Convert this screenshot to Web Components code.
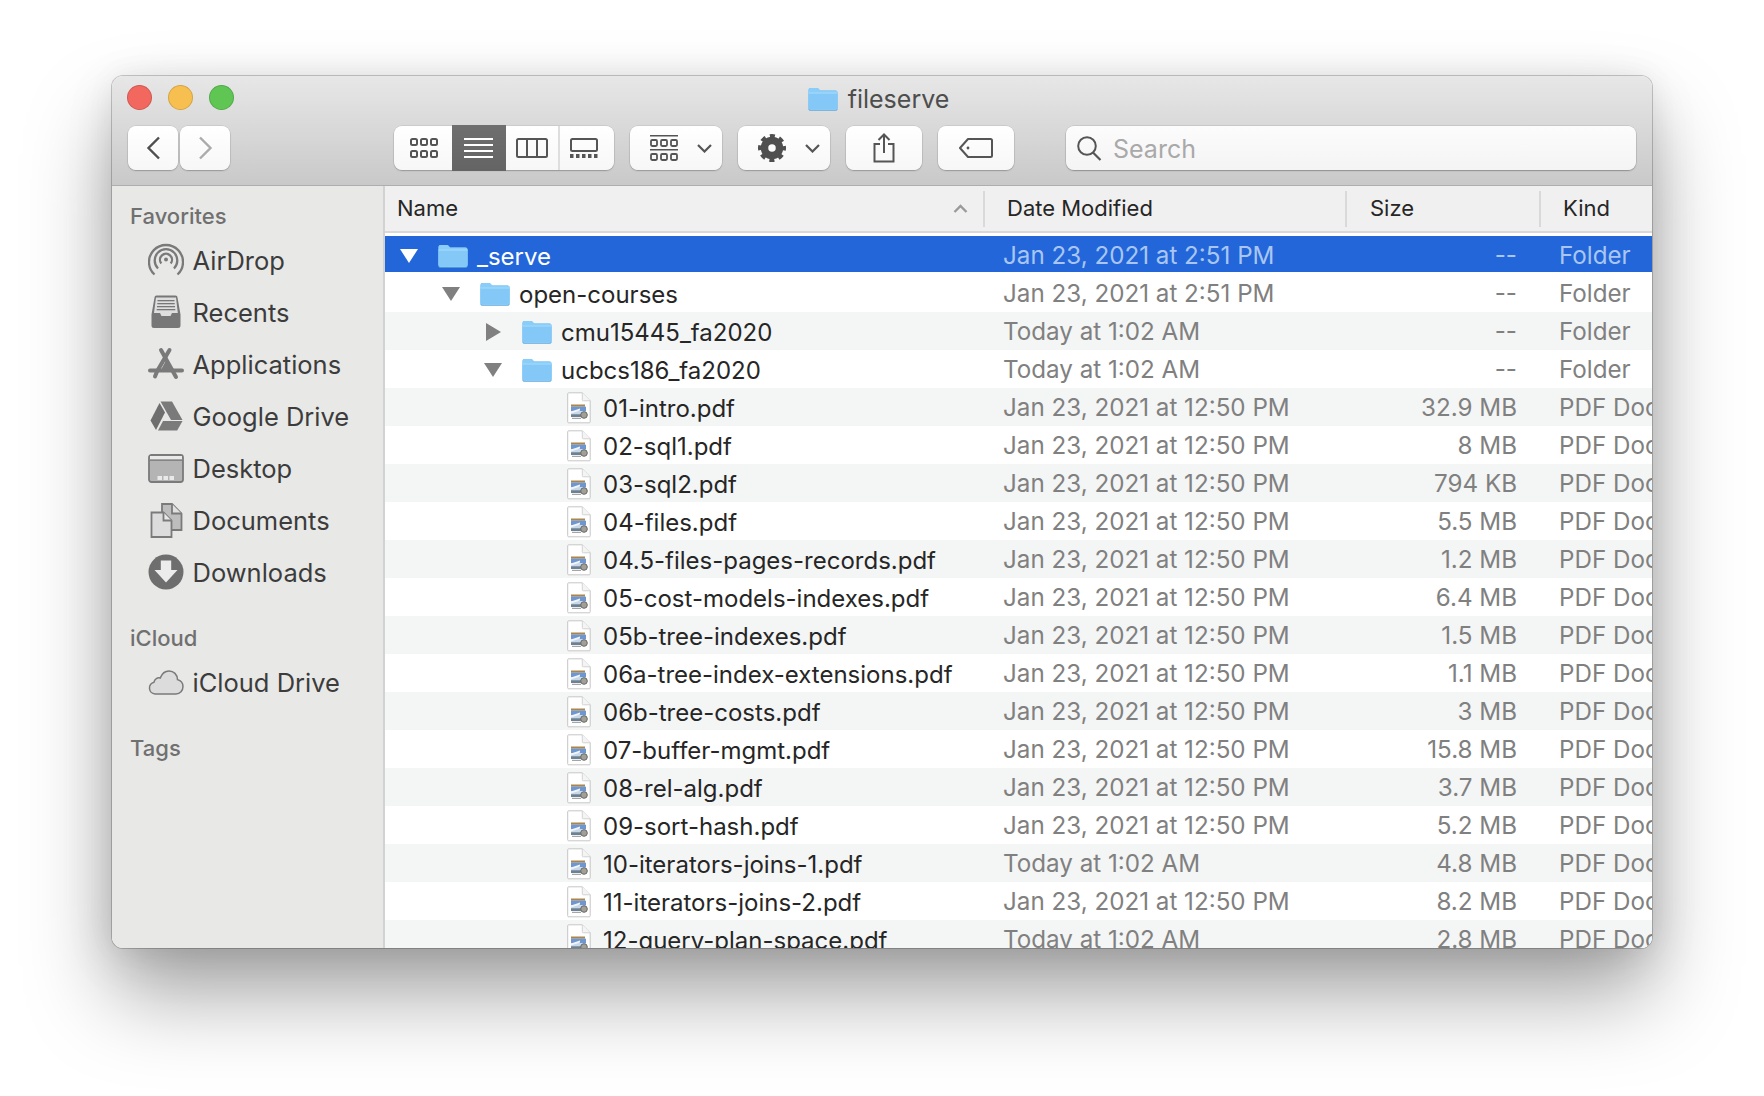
<!DOCTYPE html>
<html>
<head>
<meta charset="utf-8">
<title>fileserve</title>
<style>
html, body { margin:0; padding:0; background:#fff; }
body { width:1764px; height:1096px; overflow:hidden; font-family:Inter,"Liberation Sans",sans-serif; }
</style>
</head>
<body>
<finder-window>
  <window-toolbar slot="toolbar"></window-toolbar>
  <finder-sidebar slot="sidebar"></finder-sidebar>
  <file-list slot="list"></file-list>
</finder-window>

<script>
const FONT = 'Inter,"Liberation Sans",sans-serif';

// all the drawn icons, sized in real pixels
const folderSvg = (w, h) => `<svg width="${w}" height="${h}" viewBox="0 0 30 24">
  <path d="M0.5 3a2 2 0 0 1 2-2h6.5a2 2 0 0 1 1.5.7l1.6 1.8h15.4a2 2 0 0 1 2 2v16a2 2 0 0 1-2 2h-25a2 2 0 0 1-2-2z" fill="#6db5ea"/>
  <path d="M0.5 3a2 2 0 0 1 2-2h6.5a2 2 0 0 1 1.5.7l1.6 1.8h15.4a2 2 0 0 1 2 2v15.6a2 2 0 0 1-2 2h-25a2 2 0 0 1-2-2z" fill="#8acdf9"/>
  <path d="M0.5 6.2h29v14.4a1.6 1.6 0 0 1-1.6 1.6h-25.8a1.6 1.6 0 0 1-1.6-1.6z" fill="#84c8f7"/>
  <path d="M0.5 5.5h29v1h-29z" fill="#a5dafc"/>
  <path d="M0.5 21.4a2 2 0 0 0 2 1.6h25a2 2 0 0 0 2-1.6v1a2 2 0 0 1-2 1.2h-25a2 2 0 0 1-2-1.2z" fill="#5b9fd4"/>
</svg>`;

const ICONS = {
  folder: folderSvg(30, 24),
  pdf: `<svg width="24" height="32" viewBox="0 0 24 32">
    <path d="M0.7 1.8a1 1 0 0 1 1-1h13.6l7.9 8v21a1 1 0 0 1-1 1h-20.500a1 1 0 0 1-1-1z" fill="#fff" stroke="#c6c6c6" stroke-width="1"/>
    <path d="M15.300 .8v7a1 1 0 0 0 1 1h6.900" fill="#f4f4f4" stroke="#d2d2d2" stroke-width="1"/>
    <rect x="4" y="12.500" width="14" height="2.200" fill="#a98650"/>
    <rect x="4" y="14.700" width="15" height="4.500" fill="#6c97d4"/>
    <rect x="4" y="19.200" width="15" height="3" fill="#c6d8ea"/>
    <path d="M4 19.500l9-3v2l-9 3z" fill="#f4f4f4"/>
    <rect x="4" y="22.200" width="11" height="2.800" fill="#6d8194"/>
    <circle cx="17" cy="23" r="3.300" fill="#a09f98" stroke="#6a6a64" stroke-width="1"/>
    <rect x="5" y="25.800" width="9" height="1.200" fill="#a5a5a5"/>
  </svg>`,
  back: `<svg width="15" height="24" viewBox="0 0 15 24"><path d="M13 1.500 2.500 12 13 22.500" fill="none" stroke="#4f4f4f" stroke-width="2.400"/></svg>`,
  forward: `<svg width="15" height="24" viewBox="0 0 15 24"><path d="M2 1.500 12.500 12 2 22.500" fill="none" stroke="#ababab" stroke-width="2.400"/></svg>`,
  icons: `<svg width="28" height="20" viewBox="0 0 28 20" fill="none" stroke="#555" stroke-width="2">
    <rect x="1" y="1" width="6" height="6" rx="1.500"/><rect x="11" y="1" width="6" height="6" rx="1.500"/><rect x="21" y="1" width="6" height="6" rx="1.500"/>
    <rect x="1" y="13" width="6" height="6" rx="1.500"/><rect x="11" y="13" width="6" height="6" rx="1.500"/><rect x="21" y="13" width="6" height="6" rx="1.500"/></svg>`,
  list: `<svg width="29" height="20" viewBox="0 0 29 20" fill="#fff"><rect y="0" width="29" height="2"/><rect y="6" width="29" height="2"/><rect y="12" width="29" height="2"/><rect y="18" width="29" height="2"/></svg>`,
  columns: `<svg width="32" height="20" viewBox="0 0 32 20" fill="none" stroke="#555" stroke-width="2"><rect x="1" y="1" width="30" height="18" rx="1.500"/><path d="M11 1v18M21 1v18"/></svg>`,
  gallery: `<svg width="28" height="20" viewBox="0 0 28 20"><rect x="1" y="1" width="26" height="12" rx="1.500" fill="none" stroke="#555" stroke-width="2"/><g fill="#555"><rect y="16" width="3.500" height="4"/><rect x="6" y="16" width="3.500" height="4"/><rect x="12" y="16" width="3.500" height="4"/><rect x="18" y="16" width="3.500" height="4"/><rect x="24" y="16" width="3.500" height="4"/></g></svg>`,
  group: `<svg width="28" height="26" viewBox="0 0 28 26"><g fill="#555"><rect width="28" height="1.500"/><rect y="14" width="28" height="1.500"/></g><g fill="none" stroke="#555" stroke-width="1.800">
    <rect x="1" y="5" width="6" height="6" rx="1.200"/><rect x="11" y="5" width="6" height="6" rx="1.200"/><rect x="21" y="5" width="6" height="6" rx="1.200"/>
    <rect x="1" y="19" width="6" height="6" rx="1.200"/><rect x="11" y="19" width="6" height="6" rx="1.200"/><rect x="21" y="19" width="6" height="6" rx="1.200"/></g></svg>`,
  chevron: `<svg width="15" height="9" viewBox="0 0 15 9"><path d="M1 1l6.500 6.500L14 1" fill="none" stroke="#555" stroke-width="2.200"/></svg>`,
  gear: `<svg width="28" height="28" viewBox="0 0 28 28"><circle cx="14" cy="14" r="7.500" fill="none" stroke="#4f4f4f" stroke-width="7.500"/><circle cx="14" cy="14" r="12" fill="none" stroke="#4f4f4f" stroke-width="4" stroke-dasharray="5 4.425" stroke-dashoffset="2.500"/></svg>`,
  share: `<svg width="22" height="30" viewBox="0 0 22 30" fill="none" stroke="#555" stroke-width="2"><path d="M7 11H1.500v17.500h19V11H15"/><path d="M11 20V1.500M5.500 7 11 1.500 16.500 7"/></svg>`,
  tag: `<svg width="34" height="20" viewBox="0 0 34 20" fill="none" stroke="#555" stroke-width="2"><path d="M9 1h22.500a1.500 1.500 0 0 1 1.500 1.500v15a1.500 1.500 0 0 1-1.500 1.500H9l-8-9z" stroke-linejoin="round"/><circle cx="9" cy="10" r="1.400" fill="#555" stroke="none"/></svg>`,
  search: `<svg width="25" height="25" viewBox="0 0 25 25" fill="none" stroke="#555" stroke-width="2"><circle cx="10" cy="10" r="8.800"/><path d="M16 16.500l7.500 7.500" stroke-width="2.200"/></svg>`,
  airdrop: `<svg width="36" height="36" viewBox="0 0 36 36" fill="none" stroke="#7a7a7a" stroke-width="2.300">
    <path d="M6.500 32.500a17 17 0 1 1 23 0"/><path d="M10 26.500a11.300 11.300 0 1 1 16 0"/><path d="M13.300 21.500a6 6 0 1 1 9.400 0"/><circle cx="18" cy="17.500" r="2" fill="#7a7a7a" stroke="none"/></svg>`,
  recents: `<svg width="36" height="36" viewBox="0 0 36 36"><path d="M6.500 3.500a2 2 0 0 1 2-2h19a2 2 0 0 1 2 2l3 17v11a2.500 2.500 0 0 1-2.500 2.500h-24a2.500 2.500 0 0 1-2.500-2.500v-11z" fill="#777"/><path d="M8 3.500h20l1.800 15.500h-5.800l-1.500 3h-9l-1.500-3h-6z" fill="#dedede"/><g fill="#777"><rect x="9.500" y="6" width="17" height="1.300"/><rect x="9.300" y="9" width="17.400" height="1.300"/><rect x="9" y="12" width="18" height="1.300"/><rect x="8.700" y="15" width="18.600" height="1.300"/></g></svg>`,
  applications: `<svg width="36" height="34" viewBox="0 0 36 34" fill="none" stroke="#7a7a7a" stroke-linecap="round"><path d="M13 3l15 27" stroke-width="4"/><path d="M21.500 3L9 24.500 7 29.500" stroke-width="4"/><path d="M2 23.500h32" stroke-width="4"/><path d="M12.500 23.500 18 13.500 23.500 23.500z" fill="#7a7a7a" stroke="none"/></svg>`,
  drive: `<svg width="33" height="30" viewBox="0 0 33 30"><path d="M10.500 .5h11.500l10.500 18.500h-11.500z" fill="#7a7a7a"/><path d="M9.500 2 15 11.500 6 29 0.500 19.500z" fill="#6e6e6e"/><path d="M8 29.500l5-9.500h19.500l-5.300 9.500z" fill="#7a7a7a"/></svg>`,
  desktop: `<svg width="36" height="29" viewBox="0 0 36 29"><rect x="1" y="1" width="34" height="27" rx="2.500" fill="#b4b4b4" stroke="#7a7a7a" stroke-width="1.800"/><rect x="2" y="2" width="32" height="3.500" fill="#e9e9e9"/><rect x="2" y="5.500" width="32" height="1.300" fill="#7a7a7a"/><g fill="#e9e9e9"><rect x="9.500" y="22" width="4.500" height="4"/><rect x="15.500" y="22" width="4.500" height="4"/><rect x="21.500" y="22" width="4.500" height="4"/></g></svg>`,
  documents: `<svg width="33" height="35" viewBox="0 0 33 35" stroke="#7a7a7a" stroke-width="1.800"><path d="M12 1h10l9.500 9.500V27H12z" fill="#bdbdbd"/><path d="M22 1v9.500h9.500" fill="#e0e0e0"/><path d="M1.500 9.500h12l8 8V34h-20z" fill="#dcdcdc"/><path d="M13.500 9.500v8h8" fill="#e8e8e8"/></svg>`,
  downloads: `<svg width="36" height="36" viewBox="0 0 36 36"><circle cx="18" cy="18" r="17.500" fill="#6e6e6e"/><path d="M12.800 6.500h10.400v9.500h6.300L18 28.500 6.500 16h6.300z" fill="#ececec"/></svg>`,
  cloud: `<svg width="36" height="25" viewBox="0 0 36 25"><path d="M7 24a6 6 0 0 1-1-11.800C6.600 8.800 9.500 7.200 12.200 8 14 3.400 17.500 1 21 1c4.800 0 8.300 3.400 8.500 8.600 3.700 1 5.500 3.700 5.500 7 0 4-3 7.400-7 7.400z" fill="#dcdcdc" stroke="#7a7a7a" stroke-width="1.500"/></svg>`
};

class FinderIcon extends HTMLElement {
  connectedCallback() {
    if (this.shadowRoot) return;
    this.attachShadow({ mode: 'open' });
    this.shadowRoot.innerHTML = `<style>:host{display:inline-flex;align-items:center;justify-content:center;line-height:0}</style>${ICONS[this.getAttribute('name')] || ''}`;
  }
}
customElements.define('finder-icon', FinderIcon);

const windowTemplate = document.createElement('template');
windowTemplate.innerHTML = `
<style>
:host { display:block; width:1540px; height:872px; margin:76px 0 0 112px; border-radius:11px;
  box-shadow:0 0 0 1px rgba(0,0,0,.2), 0 48px 85px rgba(0,0,0,.34), 0 12px 50px rgba(0,0,0,.1), 0 0 30px rgba(0,0,0,.05); }
.frame { height:100%; border-radius:11px; overflow:hidden; display:flex; flex-direction:column; }
.body { flex:1; min-height:0; display:flex; }
</style>
<div class="frame">
  <slot name="toolbar"></slot>
  <div class="body">
    <slot name="sidebar"></slot>
    <slot name="list"></slot>
  </div>
</div>`;
class FinderWindow extends HTMLElement {
  constructor() {
    super();
    this.attachShadow({ mode: 'open' });
    this.shadowRoot.appendChild(windowTemplate.content.cloneNode(true));
  }
}
customElements.define('finder-window', FinderWindow);

class ToolButton extends HTMLElement {
  constructor() {
    super();
    this.attachShadow({ mode: 'open' });
    this.shadowRoot.innerHTML = `
<style>
:host { display:flex; align-items:center; justify-content:center; box-sizing:border-box; height:44px; width:var(--w,50px);
  background:linear-gradient(#ffffff,#f7f7f7); border-radius:8px; box-shadow:0 0 0 .5px rgba(0,0,0,.12), 0 1px 1.500px rgba(0,0,0,.22); }
</style><slot></slot>`;
  }
}
customElements.define('tool-button', ToolButton);

const toolbarTemplate = document.createElement('template');
toolbarTemplate.innerHTML = `
<style>
:host { display:block; height:110px; box-sizing:border-box; background:linear-gradient(#e7e7e7,#c9c9c9); border-bottom:1.500px solid #aeaeae; flex:none;
  font-family:${FONT}; }
.titlebar { height:50px; box-sizing:border-box; display:grid; grid-template-columns:1fr auto 1fr; align-items:center; padding:0 22px 4px 15px; }
.lights { display:flex; gap:16px; margin-top:-3px; }
.light { width:23px; height:23px; border-radius:50%; border:.5px solid rgba(0,0,0,.14); }
.title { display:flex; align-items:center; gap:10px; font-size:25px; color:#4d4d4d; }
.controls { display:flex; align-items:center; padding:0 16px; }
.seg { display:flex; width:220px; height:44px; margin-left:164px; background:linear-gradient(#fff,#f7f7f7); border-radius:8px; box-shadow:0 0 0 .5px rgba(0,0,0,.12), 0 1px 1.500px rgba(0,0,0,.22); }
.seg > div { display:flex; align-items:center; justify-content:center; box-sizing:border-box; }
.seg .on { background:linear-gradient(#6f6f6f,#646464); height:46px; margin-top:-1px; padding-right:2px; }
.bar { border-left:2px solid #dedede; padding-right:4px; }
.gap { margin-left:16px; }
.inner { display:flex; align-items:center; gap:19px; padding-left:9px; }
.search { flex:1; height:44px; margin-left:52px; display:flex; align-items:center; gap:11px; padding-left:11px; box-sizing:border-box;
  background:linear-gradient(#fcfcfc,#f4f4f4); border-radius:8px; box-shadow:0 0 0 .5px rgba(0,0,0,.14), 0 1px 1.500px rgba(0,0,0,.25); font-size:25px; color:#a9a9a9; }
.search span { padding-top:2px; }
</style>
<div class="titlebar">
  <div class="lights">
    <div class="light" style="background:#f2675e"></div>
    <div class="light" style="background:#f7bf4f"></div>
    <div class="light" style="background:#5fc653"></div>
  </div>
  <div class="title"><finder-icon name="folder"></finder-icon><span>fileserve</span></div>
  <div></div>
</div>
<div class="controls">
  <tool-button><finder-icon name="back"></finder-icon></tool-button>
  <tool-button style="margin-left:2px"><finder-icon name="forward"></finder-icon></tool-button>
  <div class="seg">
    <div style="width:58px;padding-left:2px"><finder-icon name="icons"></finder-icon></div>
    <div class="on" style="width:54px"><finder-icon name="list"></finder-icon></div>
    <div style="width:52px"><finder-icon name="columns"></finder-icon></div>
    <div class="bar" style="width:54px"><finder-icon name="gallery"></finder-icon></div>
  </div>
  <tool-button class="gap" style="--w:92px"><div class="inner"><finder-icon name="group"></finder-icon><finder-icon name="chevron"></finder-icon></div></tool-button>
  <tool-button class="gap" style="--w:92px"><div class="inner"><finder-icon name="gear"></finder-icon><finder-icon name="chevron"></finder-icon></div></tool-button>
  <tool-button class="gap" style="--w:76px"><finder-icon name="share"></finder-icon></tool-button>
  <tool-button class="gap" style="--w:76px"><finder-icon name="tag"></finder-icon></tool-button>
  <div class="search"><finder-icon name="search"></finder-icon><span>Search</span></div>
</div>`;
class WindowToolbar extends HTMLElement {
  constructor() {
    super();
    this.attachShadow({ mode: 'open' });
    this.shadowRoot.appendChild(toolbarTemplate.content.cloneNode(true));
  }
}
customElements.define('window-toolbar', WindowToolbar);

class SidebarItem extends HTMLElement {
  constructor() {
    super();
    this.attachShadow({ mode: 'open' });
  }
  connectedCallback() {
    this.shadowRoot.innerHTML = `
<style>
:host { display:flex; align-items:center; height:var(--item-h,52px); padding-left:36px; font-size:25.5px; color:#3c3c3c; }
.ic { width:36px; display:flex; justify-content:center; margin-right:8.500px; }
</style>
<div class="ic"><finder-icon name="${this.getAttribute('icon')}"></finder-icon></div><slot></slot>`;
  }
}
customElements.define('sidebar-item', SidebarItem);

const sidebarTemplate = document.createElement('template');
sidebarTemplate.innerHTML = `
<style>
:host { display:block; box-sizing:border-box; flex:none; width:273px; background:#e8e8e7; border-right:2px solid #d2d2d2; padding:12px 0 0 0; font-family:${FONT}; }
h3 { margin:0; padding-left:18px; font-size:22px; font-weight:500; color:#707070; line-height:32px; }
.fav { margin-top:2px; }
.cloud { margin-top:24px; }
.tags { margin-top:24px; }
.items { margin-top:2px; }
</style>
<h3 class="fav">Favorites</h3>
<div class="items">
  <sidebar-item icon="airdrop">AirDrop</sidebar-item>
  <sidebar-item icon="recents">Recents</sidebar-item>
  <sidebar-item icon="applications">Applications</sidebar-item>
  <sidebar-item icon="drive">Google Drive</sidebar-item>
  <sidebar-item icon="desktop">Desktop</sidebar-item>
  <sidebar-item icon="documents">Documents</sidebar-item>
  <sidebar-item icon="downloads">Downloads</sidebar-item>
</div>
<h3 class="cloud">iCloud</h3>
<div class="items">
  <sidebar-item icon="cloud">iCloud Drive</sidebar-item>
</div>
<h3 class="tags">Tags</h3>`;
class FinderSidebar extends HTMLElement {
  constructor() {
    super();
    this.attachShadow({ mode: 'open' });
    this.shadowRoot.appendChild(sidebarTemplate.content.cloneNode(true));
  }
}
customElements.define('finder-sidebar', FinderSidebar);

class FileRow extends HTMLElement {
  constructor() {
    super();
    this.attachShadow({ mode: 'open' });
  }
  connectedCallback() {
    const depth = Number(this.getAttribute('depth') || 0);
    const open = this.getAttribute('open');
    let tri = '';
    if (open === 'yes') tri = '<svg width="18" height="14" viewBox="0 0 18 14"><path d="M0 0h18L9 14z" fill="currentColor"/></svg>';
    if (open === 'no') tri = '<svg width="15" height="18" viewBox="0 0 15 18"><path d="M0 0l15 9L0 18z" fill="currentColor"/></svg>';
    this.shadowRoot.innerHTML = `
<style>
:host { display:block; height:38px; background:var(--row-bg,#fff); font-size:24.2px; line-height:40px; white-space:nowrap; overflow:hidden; }
:host([stripe]) { --row-bg:#f4f5f5; }
:host([selected]) { --row-bg:linear-gradient(#2366d9 0,#2366d9 36px,#fff 36px); }
.grid { display:grid; grid-template-columns:599px 362px 194px 113px; height:36px; }
.name { display:flex; align-items:center; padding-left:${15 + depth * 42}px; color:#262626; font-size:24px; line-height:38px; }
.tri { width:18px; display:flex; justify-content:center; color:#808080; margin-right:20px; }
.ic { width:30px; display:flex; justify-content:center; margin-right:9px; }
.lbl { padding-top:1px; }
.date { padding-left:19px; color:#808080; }
.size { padding-right:23px; text-align:right; color:#808080; }
.kind { padding-left:19px; color:#808080; overflow:hidden; }
:host([selected]) .name, :host([selected]) .tri { color:#fff; }
:host([selected]) .date, :host([selected]) .size, :host([selected]) .kind { color:#a9c6f2; }
</style>
<div class="grid">
  <div class="name"><span class="tri">${tri}</span><span class="ic"><finder-icon name="${this.getAttribute('icon') || 'pdf'}"></finder-icon></span><span class="lbl"><slot></slot></span></div>
  <div class="date">${this.getAttribute('date')}</div>
  <div class="size">${this.getAttribute('size')}</div>
  <div class="kind">${this.getAttribute('kind')}</div>
</div>`;
  }
}
customElements.define('file-row', FileRow);

const OLD = 'Jan 23, 2021 at 12:50 PM';
const TODAY = 'Today at 1:02 AM';
const FILES = [
  ['_serve', 'Jan 23, 2021 at 2:51 PM', '--', 'Folder', 0, 'yes', 'folder'],
  ['open-courses', 'Jan 23, 2021 at 2:51 PM', '--', 'Folder', 1, 'yes', 'folder'],
  ['cmu15445_fa2020', TODAY, '--', 'Folder', 2, 'no', 'folder'],
  ['ucbcs186_fa2020', TODAY, '--', 'Folder', 2, 'yes', 'folder'],
  ['01-intro.pdf', OLD, '32.9 MB'],
  ['02-sql1.pdf', OLD, '8 MB'],
  ['03-sql2.pdf', OLD, '794 KB'],
  ['04-files.pdf', OLD, '5.5 MB'],
  ['04.5-files-pages-records.pdf', OLD, '1.2 MB'],
  ['05-cost-models-indexes.pdf', OLD, '6.4 MB'],
  ['05b-tree-indexes.pdf', OLD, '1.5 MB'],
  ['06a-tree-index-extensions.pdf', OLD, '1.1 MB'],
  ['06b-tree-costs.pdf', OLD, '3 MB'],
  ['07-buffer-mgmt.pdf', OLD, '15.8 MB'],
  ['08-rel-alg.pdf', OLD, '3.7 MB'],
  ['09-sort-hash.pdf', OLD, '5.2 MB'],
  ['10-iterators-joins-1.pdf', TODAY, '4.8 MB'],
  ['11-iterators-joins-2.pdf', OLD, '8.2 MB'],
  ['12-query-plan-space.pdf', TODAY, '2.8 MB']
];

const listTemplate = document.createElement('template');
listTemplate.innerHTML = `
<style>
:host { display:flex; flex-direction:column; flex:1; min-width:0; background:#fff; overflow:hidden; font-family:${FONT}; }
.head { flex:none; display:grid; grid-template-columns:598px 362px 194px 114px; height:45px; align-items:center; background:#f0f0f0; border-bottom:2px solid #d8d8d8; font-size:22px; color:#262626; }
.head > div { height:36px; line-height:35px; padding-left:22px; box-sizing:border-box; border-left:2px solid #d9d9d9; }
.head > div:first-child { padding-left:12px; border-left:0; position:relative; }
.head > div:nth-child(3) { padding-left:23px; }
.sort { position:absolute; right:15px; top:0; height:36px; display:flex; align-items:center; }
.rows { flex:1; min-height:0; padding-top:3px; overflow:hidden; }
</style>
<div class="head">
  <div>Name<span class="sort"><svg width="15" height="9" viewBox="0 0 15 9"><path d="M1.500 8l6-6 6 6" fill="none" stroke="#9a9a9a" stroke-width="2.400"/></svg></span></div>
  <div>Date Modified</div>
  <div>Size</div>
  <div>Kind</div>
</div>
<div class="rows"></div>`;
class FileList extends HTMLElement {
  constructor() {
    super();
    this.attachShadow({ mode: 'open' });
    this.shadowRoot.appendChild(listTemplate.content.cloneNode(true));
  }
  connectedCallback() {
    const rows = this.shadowRoot.querySelector('.rows');
    FILES.forEach((f, i) => {
      const row = document.createElement('file-row');
      row.setAttribute('date', f[1]);
      row.setAttribute('size', f[2]);
      row.setAttribute('kind', f[3] || 'PDF Document');
      row.setAttribute('depth', f[4] === undefined ? 3 : f[4]);
      if (f[5]) row.setAttribute('open', f[5]);
      if (f[6]) row.setAttribute('icon', f[6]);
      if (i === 0) row.setAttribute('selected', '');
      else if (i % 2 === 0) row.setAttribute('stripe', '');
      row.textContent = f[0];
      rows.appendChild(row);
    });
  }
}
customElements.define('file-list', FileList);
</script>
</body>
</html>
